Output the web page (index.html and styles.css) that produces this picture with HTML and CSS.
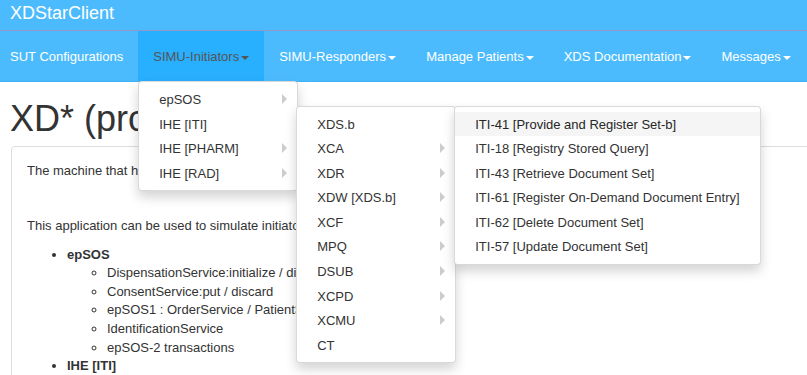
FILE: index.html
```html
<!DOCTYPE html>
<html lang="en">
<head>
<meta charset="utf-8">
<title>XDStarClient</title>
<link rel="stylesheet" href="styles.css">
</head>
<body>
<header class="brand-bar"><span class="brand">XDStarClient</span></header>
<nav class="main-nav">
  <ul class="nav-list">
    <li class="nav-item"><a class="nav-link">SUT Configurations</a></li>
    <li class="nav-item dropdown active">
      <a class="nav-link">SIMU-Initiators<span class="caret"></span></a>
      <ul class="dropdown-menu menu-level1">
        <li class="submenu"><a class="menu-link">epSOS</a></li>
        <li class="submenu open">
          <a class="menu-link">IHE [ITI]</a>
          <ul class="dropdown-menu menu-sub">
            <li class="submenu open">
              <a class="menu-link">XDS.b</a>
              <ul class="dropdown-menu menu-sub">
                <li><a class="menu-link hover">ITI-41 [Provide and Register Set-b]</a></li>
                <li><a class="menu-link">ITI-18 [Registry Stored Query]</a></li>
                <li><a class="menu-link">ITI-43 [Retrieve Document Set]</a></li>
                <li><a class="menu-link">ITI-61 [Register On-Demand Document Entry]</a></li>
                <li><a class="menu-link">ITI-62 [Delete Document Set]</a></li>
                <li><a class="menu-link">ITI-57 [Update Document Set]</a></li>
              </ul>
            </li>
            <li class="submenu"><a class="menu-link">XCA</a></li>
            <li class="submenu"><a class="menu-link">XDR</a></li>
            <li class="submenu"><a class="menu-link">XDW [XDS.b]</a></li>
            <li class="submenu"><a class="menu-link">XCF</a></li>
            <li class="submenu"><a class="menu-link">MPQ</a></li>
            <li class="submenu"><a class="menu-link">DSUB</a></li>
            <li class="submenu"><a class="menu-link">XCPD</a></li>
            <li class="submenu"><a class="menu-link">XCMU</a></li>
            <li><a class="menu-link">CT</a></li>
          </ul>
        </li>
        <li class="submenu"><a class="menu-link">IHE [PHARM]</a></li>
        <li class="submenu"><a class="menu-link">IHE [RAD]</a></li>
      </ul>
    </li>
    <li class="nav-item"><a class="nav-link">SIMU-Responders<span class="caret"></span></a></li>
    <li class="nav-item"><a class="nav-link">Manage Patients<span class="caret"></span></a></li>
    <li class="nav-item"><a class="nav-link">XDS Documentation<span class="caret"></span></a></li>
    <li class="nav-item"><a class="nav-link">Messages<span class="caret"></span></a></li>
  </ul>
</nav>
<main class="page">
  <h1 class="page-title">XD* (profiles)</h1>
  <section class="panel">
    <p class="intro">The machine that hosts this tool is a test server.</p>
    <p>This application can be used to simulate initiators for the XD* profiles.</p>
    <ul class="list">
      <li><b>epSOS</b>
        <ul class="sublist">
          <li>DispensationService:initialize / discard</li>
          <li>ConsentService:put / discard</li>
          <li>epSOS1 : OrderService / PatientService</li>
          <li>IdentificationService</li>
          <li>epSOS-2 transactions</li>
        </ul>
      </li>
      <li><b>IHE [ITI]</b></li>
    </ul>
  </section>
</main>
</body>
</html>
```
FILE: styles.css
```css
html, body {
  margin: 0;
  padding: 0;
  overflow: hidden;
}
body {
  font-family: "Liberation Sans", Arial, sans-serif;
  font-size: 13px;
  line-height: 1.42857;
  color: #333;
  background: #fff;
}
.brand-bar {
  box-sizing: border-box;
  height: 31px;
  background: #4cbbfd;
  border-bottom: 1px solid #8d98cc;
  display: flex;
  align-items: center;
  padding-left: 10px;
}
.brand {
  color: #fff;
  font-size: 18px;
  line-height: 20px;
  margin-top: -5px;
}
.main-nav {
  background: #4cbbfd;
  border-bottom: 1px solid #3fb2f4;
  height: 50px;
  position: relative;
  z-index: 10;
}
.nav-list {
  list-style: none;
  margin: 0 0 0 -5px;
  padding: 0;
  display: flex;
}
.nav-item {
  position: relative;
}
.nav-link {
  display: block;
  padding: 16px 15px 14px;
  line-height: 20px;
  color: #fff;
  white-space: nowrap;
}
.nav-item.active > .nav-link {
  background: #28affd;
  color: #555;
}
.caret {
  display: inline-block;
  width: 0;
  height: 0;
  margin-left: 2px;
  vertical-align: middle;
  border-top: 4px solid;
  border-right: 4px solid transparent;
  border-left: 4px solid transparent;
}
.dropdown-menu {
  position: absolute;
  list-style: none;
  margin: 0;
  padding: 5px 0;
  min-width: 160px;
  box-sizing: border-box;
  background: #fff;
  border: 1px solid rgba(0, 0, 0, 0.15);
  border-radius: 4px;
  box-shadow: 0 6px 12px rgba(0, 0, 0, 0.175);
}
.menu-level1 {
  top: 100%;
  left: 0;
}
.submenu {
  position: relative;
}
.menu-sub {
  top: 0;
  left: 100%;
  margin-top: -6px;
  margin-left: -1px;
}
.menu-link {
  display: flex;
  justify-content: space-between;
  align-items: flex-start;
  padding: 4px 20px 2px;
  line-height: 1.42857;
  color: #333;
  white-space: nowrap;
}
.menu-link.hover {
  background: #f5f5f5;
  color: #262626;
}
.submenu > .menu-link::after {
  content: "";
  display: block;
  width: 0;
  height: 0;
  margin-top: 3px;
  margin-right: -10px;
  margin-left: 10px;
  border-style: solid;
  border-width: 5px 0 5px 5px;
  border-color: transparent;
  border-left-color: #ccc;
}
.submenu.open > .menu-link::after {
  border-left-color: #fff;
}
.page {
  padding: 0 0 0 10px;
}
.page-title {
  font-size: 36px;
  font-weight: 400;
  line-height: 1.1;
  margin: 17px 0 7px;
  color: #333;
}
.panel {
  border: 1px solid #ddd;
  border-radius: 4px;
  margin: 0 -10px 0 1px;
  padding: 15px;
}
.panel p {
  margin: 0 0 10px;
}
.panel .intro {
  margin-bottom: 37px;
}
.list {
  margin: 0 0 10px;
  padding-left: 40px;
}
.sublist {
  margin: 0;
  padding-left: 40px;
  list-style-type: circle;
}
```
